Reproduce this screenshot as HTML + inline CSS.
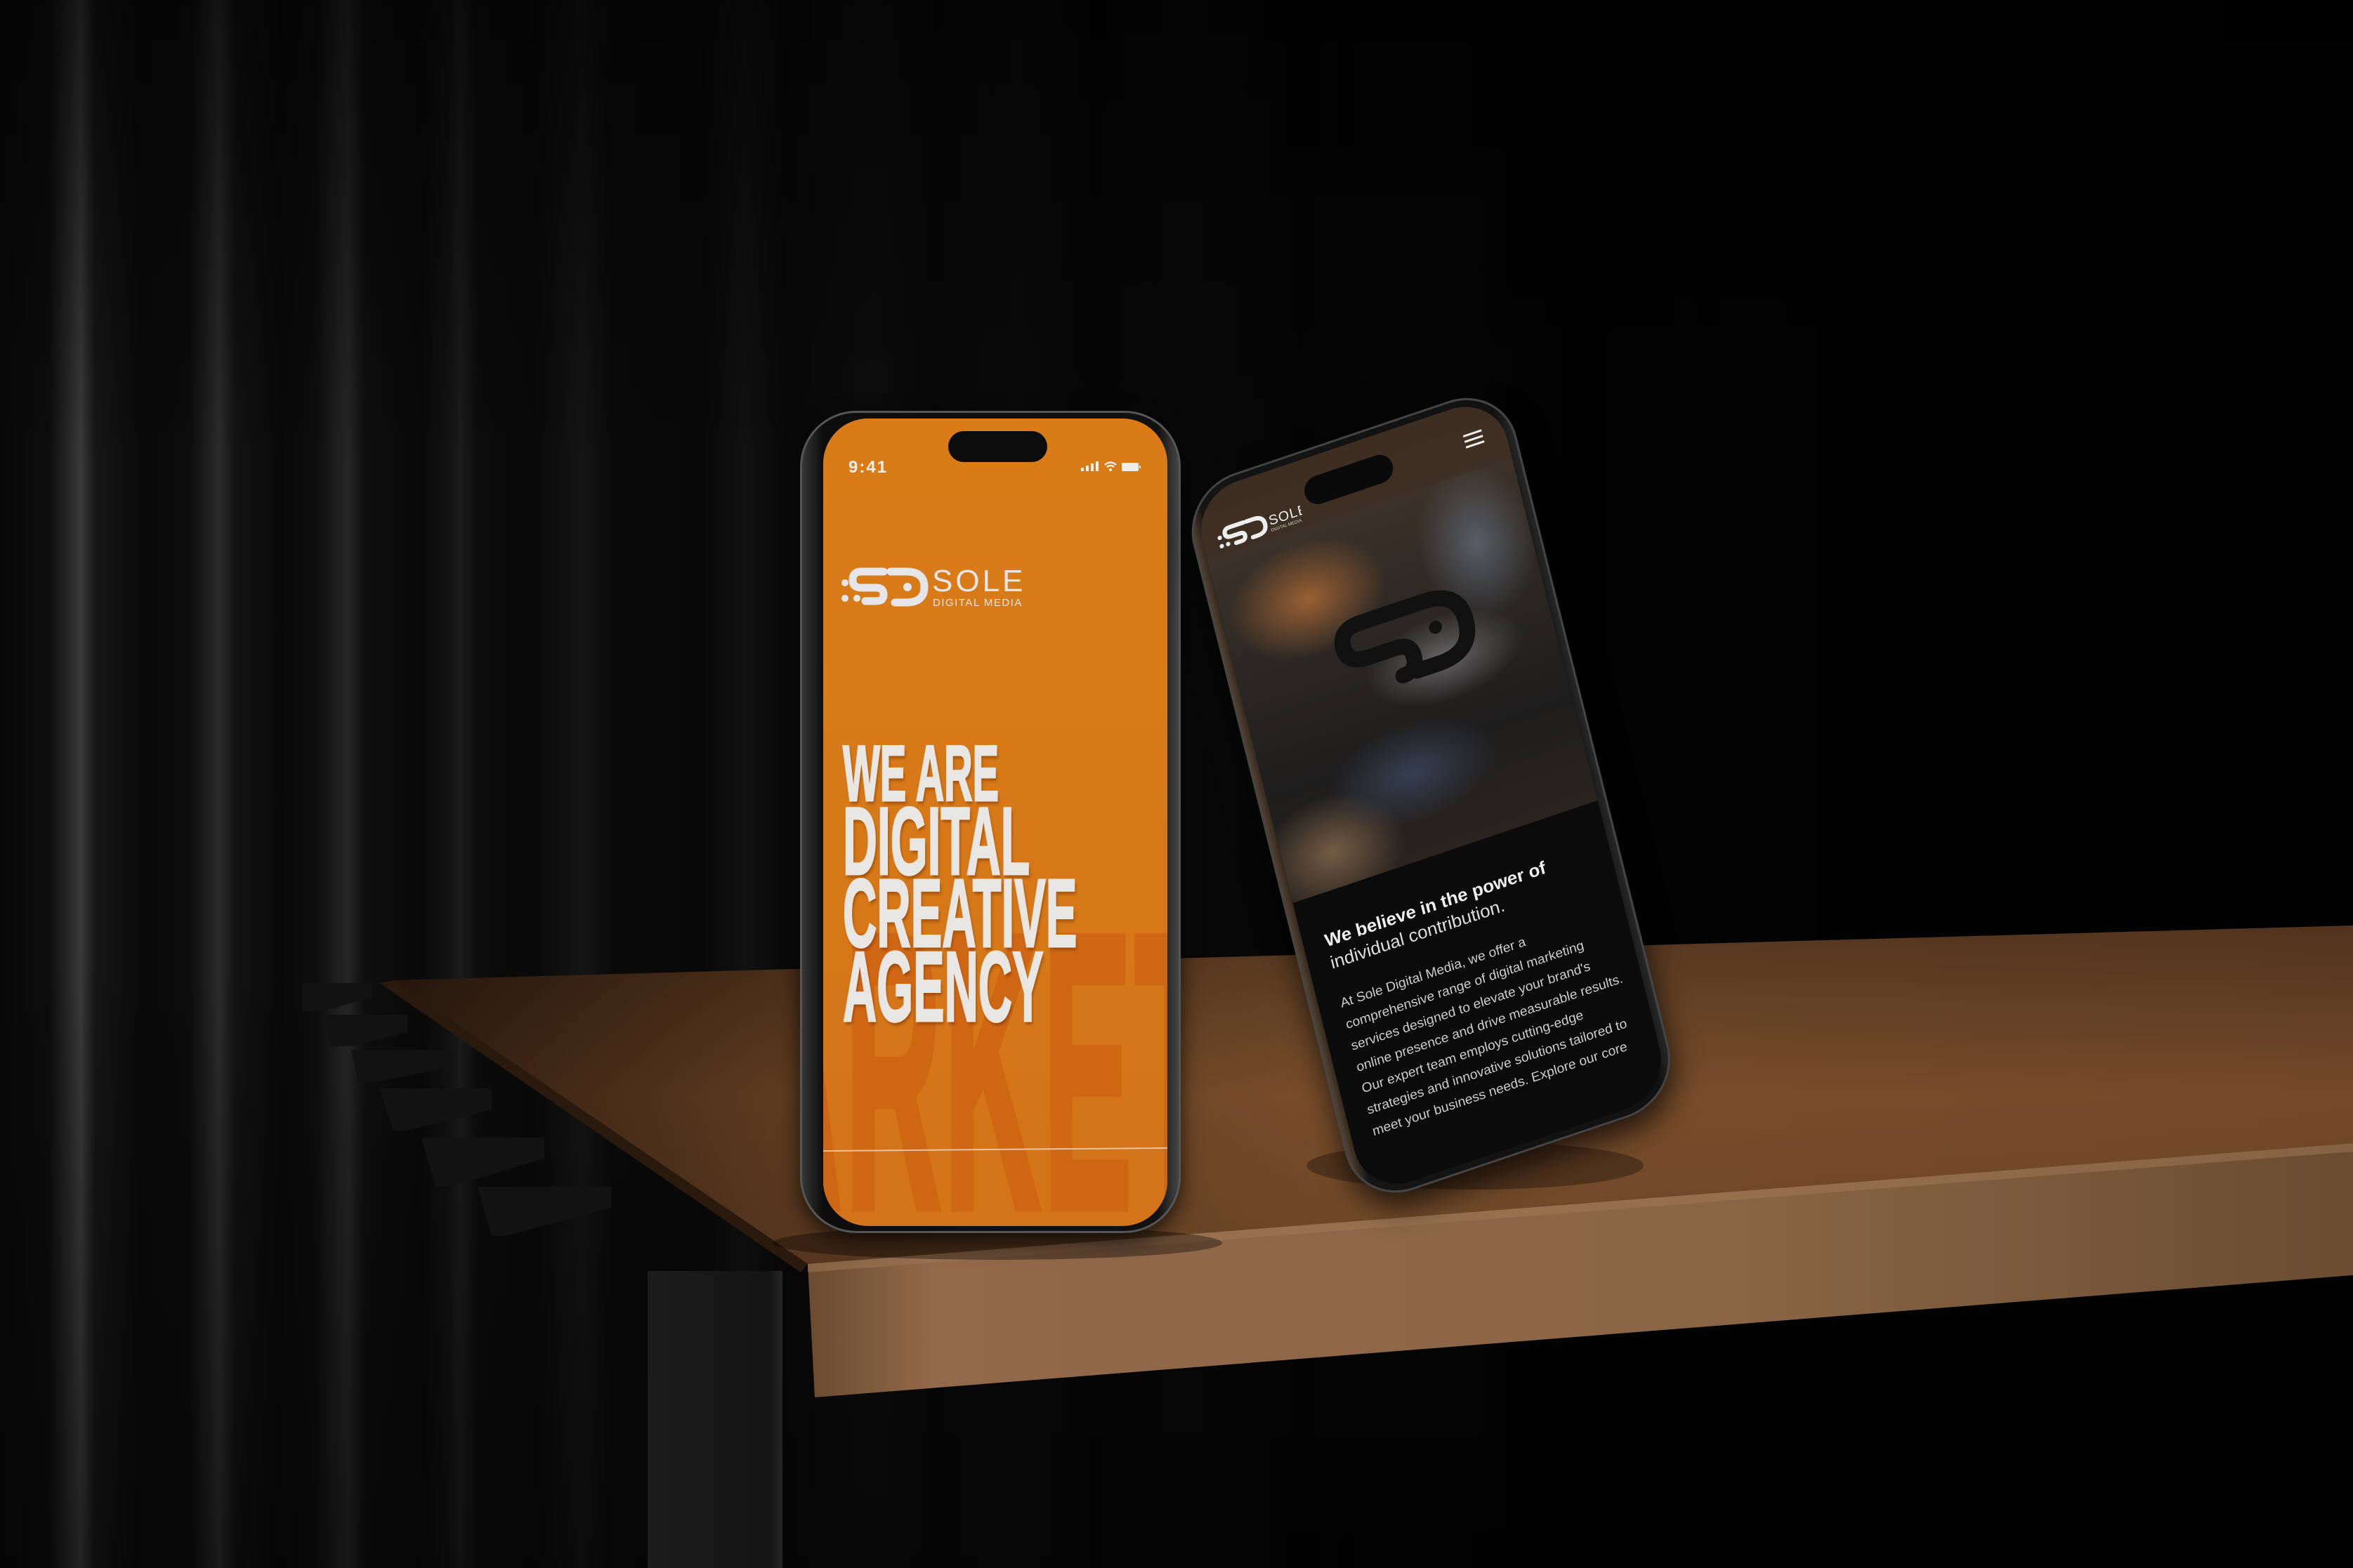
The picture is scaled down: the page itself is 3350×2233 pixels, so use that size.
<!DOCTYPE html>
<html><head><meta charset="utf-8">
<style>
*{margin:0;padding:0;box-sizing:border-box}
html,body{width:3350px;height:2233px;overflow:hidden;background:#050505}
#scene{position:absolute;left:0;top:0;width:3350px;height:2233px}
.curtain{position:absolute;left:0;top:0;width:3350px;height:2233px;
background:
linear-gradient(90deg,rgba(0,0,0,0) 0,rgba(0,0,0,0) 35%,rgba(0,0,0,.6) 65%,rgba(0,0,0,.85) 100%),
linear-gradient(90deg,#080808 0px,#0d0d0d 70px,#2a2a2a 100px,#3a3a3a 115px,#161616 135px,#0a0a0a 200px,#0c0c0c 270px,#222 300px,#2c2c2c 312px,#121212 335px,#090909 400px,#0d0d0d 450px,#1f1f1f 480px,#262626 495px,#0e0e0e 520px,#090909 600px,#121212 640px,#1c1c1c 655px,#0c0c0c 680px,#090909 760px,#141414 830px,#0a0a0a 870px,#080808 1000px,#111 1060px,#080808 1120px,#0e0e0e 1250px,#080808 1330px,#0d0d0d 1450px,#070707 1560px,#0c0c0c 1700px,#070707 1850px,#0b0b0b 2050px,#060606 2250px,#0a0a0a 2500px,#060606 2700px,#090909 3000px,#060606 3350px);}
.vshade{position:absolute;left:0;top:0;width:3350px;height:2233px;background:linear-gradient(180deg,rgba(0,0,0,.55) 0,rgba(0,0,0,0) 30%,rgba(0,0,0,0) 60%,rgba(0,0,0,.4) 100%)}
.phone1{position:absolute;left:1139px;top:585px;width:542px;height:1171px;border-radius:80px;background:linear-gradient(90deg,#3a3a3a,#0d0d0d 6%,#111 94%,#4a4a4a);box-shadow:0 10px 30px rgba(0,0,0,.7),inset 0 0 0 3px #555}
.scr1{position:absolute;left:33px;top:11px;width:490px;height:1150px;border-radius:64px;overflow:hidden;background:linear-gradient(180deg,#d97c18,#d67818 60%,#d3731a)}
.f{font-family:"Liberation Sans",sans-serif}
.hl{position:absolute;left:28px;white-space:nowrap;font-weight:bold;color:#e9e7e3;transform-origin:0 0;line-height:1;-webkit-text-stroke:3px #e9e7e3;text-shadow:4px 5px 5px rgba(120,50,0,.5)}
.bg{position:absolute;left:-110px;top:650px;white-space:nowrap;font-weight:bold;color:#cf6614;font-size:560px;line-height:1;transform:scaleX(.34);transform-origin:0 0;letter-spacing:10px;-webkit-text-stroke:12px #cf6614}
.phone2{position:absolute;left:0;top:0;width:460px;height:1040px;transform-origin:0 0;transform:matrix(1,-0.337,0.245,0.981,1680,700);border-radius:78px;background:linear-gradient(90deg,#5a4630,#151515 5%,#111 95%,#2a2a2a);box-shadow:0 20px 40px rgba(0,0,0,.7),inset 0 0 0 3px #444}
.scr2{position:absolute;left:13px;top:12px;width:434px;height:1016px;border-radius:66px;overflow:hidden;background:#0b0b0b}
.photo{position:absolute;left:0;top:0;width:434px;height:590px;background:
radial-gradient(ellipse 110px 80px at 120px 190px,rgba(170,105,55,.85),rgba(0,0,0,0)),
radial-gradient(ellipse 80px 110px at 360px 190px,rgba(100,110,125,.75),rgba(0,0,0,0)),
radial-gradient(ellipse 120px 70px at 200px 470px,rgba(55,65,85,.95),rgba(0,0,0,0)),
radial-gradient(ellipse 100px 80px at 70px 540px,rgba(120,95,70,.95),rgba(0,0,0,0)),
radial-gradient(ellipse 110px 60px at 280px 330px,rgba(180,180,185,.45),rgba(0,0,0,0)),
linear-gradient(180deg,#4a3a2c 0,#3a3027 20%,#2b2724 45%,#1e1d1d 75%,#2a241f 100%)}
.hdr{position:absolute;left:0;top:0;width:434px;height:92px;background:linear-gradient(180deg,rgba(60,45,32,.95),rgba(60,45,32,.6))}
.p2t{position:absolute;left:30px;color:#eee;white-space:nowrap}
</style></head><body>
<div id="scene">
<div class="curtain"></div>
<div class="vshade"></div>
<svg width="3350" height="2233" style="position:absolute;left:0;top:0">
<defs>
<linearGradient id="top" x1="0" y1="0" x2="1" y2="0">
<stop offset="0" stop-color="#2e1c10"/><stop offset=".2" stop-color="#5e3b20"/><stop offset=".5" stop-color="#7a4f2c"/><stop offset="1" stop-color="#74492a"/></linearGradient>
<linearGradient id="topv" x1="0" y1="0" x2="0" y2="1">
<stop offset="0" stop-color="#000" stop-opacity=".3"/><stop offset=".5" stop-color="#000" stop-opacity="0"/><stop offset="1" stop-color="#000" stop-opacity=".1"/></linearGradient>
<linearGradient id="front" x1="0" y1="0" x2="1" y2="0">
<stop offset="0" stop-color="#6a4a30"/><stop offset=".08" stop-color="#92694a"/><stop offset=".6" stop-color="#8a6545"/><stop offset="1" stop-color="#6a4c32"/></linearGradient>
<linearGradient id="leg" x1="0" y1="0" x2="1" y2="0">
<stop offset="0" stop-color="#1c1c1c"/><stop offset=".9" stop-color="#141414"/><stop offset="1" stop-color="#262626"/></linearGradient>
</defs>
<g fill="#121212">
<polygon points="430,1400 530,1400 530,1420 460,1440 430,1440"/>
<polygon points="460,1445 580,1445 580,1470 500,1490 470,1490"/>
<polygon points="500,1495 640,1495 640,1520 540,1540 510,1540"/>
<polygon points="540,1550 700,1550 700,1580 580,1610 560,1610"/>
<polygon points="600,1620 775,1620 775,1650 640,1690 620,1690"/>
<polygon points="680,1690 870,1690 870,1720 720,1760 700,1760"/>
</g>
<rect x="922" y="1810" width="192" height="423" fill="url(#leg)"/>
<polygon points="559,1396 3350,1318 3350,1628 1150,1800" fill="url(#top)"/>
<polygon points="559,1396 3350,1318 3350,1628 1150,1800" fill="url(#topv)"/>
<polygon points="559,1396 1150,1800 1140,1812 540,1400" fill="#2a1a0e"/>
<polygon points="1150,1800 3350,1628 3350,1816 1160,1990" fill="url(#front)"/>
<polygon points="1150,1800 3350,1628 3350,1640 1150,1812" fill="#a27a55" opacity=".5"/>
<ellipse cx="1420" cy="1770" rx="320" ry="24" fill="#000" opacity=".35"/>
<ellipse cx="2100" cy="1660" rx="240" ry="34" fill="#000" opacity=".3"/>
</svg>

<div class="phone1">
<div class="scr1">
<div class="bg f">ARKETI</div>
<div style="position:absolute;left:0;top:1040px;width:490px;height:2px;background:#f0d8c0;opacity:.8;transform:rotate(-0.5deg)"></div>
<div class="f" style="position:absolute;left:36px;top:56px;color:#eee;font-size:24px;font-weight:bold;letter-spacing:2px">9:41</div>
<div style="position:absolute;left:178px;top:18px;width:141px;height:44px;border-radius:22px;background:#0c0c0c"></div>
<svg style="position:absolute;left:365px;top:58px" width="90" height="22">
<g fill="#eee"><rect x="2" y="12" width="4" height="5"/><rect x="9" y="9" width="4" height="8"/><rect x="16" y="6" width="4" height="11"/><rect x="23" y="3" width="4" height="14"/></g>
<path d="M36 8 Q44 1 52 8 M39 11 Q44 7 49 11" stroke="#eee" stroke-width="2.5" fill="none"/><circle cx="44" cy="15" r="2" fill="#eee"/>
<rect x="60" y="5" width="24" height="12" rx="2" fill="#eee"/><rect x="85" y="9" width="2" height="4" fill="#eee"/></svg>
<svg style="position:absolute;left:26px;top:210px" width="130" height="60">
<g fill="#e6e6ea"><circle cx="5" cy="24" r="5"/><circle cx="5" cy="46" r="5"/><circle cx="22" cy="46" r="5"/></g>
<path d="M60 8 H28 Q16 8 16 20 Q16 31 28 31 H50 Q60 31 60 41 Q60 50 50 50 H34" stroke="#e6e6ea" stroke-width="11" fill="none" stroke-linecap="round"/>
<path d="M70 8 H92 Q118 8 118 30 Q118 52 92 52 H76" stroke="#e6e6ea" stroke-width="11" fill="none" stroke-linecap="round"/>
<circle cx="94" cy="30" r="6" fill="#e6e6ea"/></svg>
<div class="f" style="position:absolute;left:155px;top:210px;color:#e6e6ea;font-size:44px;letter-spacing:4px;line-height:1">SOLE</div>
<div class="f" style="position:absolute;left:156px;top:255px;color:#e6e6ea;font-size:15px;letter-spacing:1.5px;line-height:1">DIGITAL MEDIA</div>
<div class="hl f" style="top:450px;font-size:112px;transform:scaleX(.5)">WE ARE</div>
<div class="hl f" style="top:534px;font-size:137px;transform:scaleX(.495)">DIGITAL</div>
<div class="hl f" style="top:636px;font-size:138px;transform:scaleX(.485)">CREATIVE</div>
<div class="hl f" style="top:739px;font-size:142px;transform:scaleX(.47)">AGENCY</div>
</div>
</div>

<div class="phone2">
<div class="scr2">
<div class="photo"></div>
<svg style="position:absolute;left:120px;top:210px" width="220" height="190">
<path d="M110 35 H150 Q200 35 200 80 Q200 125 150 125 H120" stroke="#111" stroke-width="22" fill="none" stroke-linecap="round"/>
<path d="M110 35 H60 Q30 35 30 60 Q30 85 60 85 H100 Q120 85 120 105 Q120 125 100 125" stroke="#111" stroke-width="22" fill="none" stroke-linecap="round"/>
<circle cx="158" cy="75" r="9" fill="#111"/></svg>
<div class="hdr"></div>
<div style="position:absolute;left:150px;top:28px;width:125px;height:40px;border-radius:20px;background:#0a0a0a"></div>
<svg style="position:absolute;left:20px;top:50px" width="120" height="40">
<g fill="#eee"><circle cx="4" cy="18" r="3"/><circle cx="4" cy="30" r="3"/><circle cx="13" cy="30" r="3"/></g>
<path d="M40 8 H20 Q12 8 12 15 Q12 21 20 21 H32 Q38 21 38 26 Q38 32 32 32 H24" stroke="#eee" stroke-width="6" fill="none" stroke-linecap="round"/>
<path d="M44 8 H54 Q68 8 68 20 Q68 32 54 32 H48" stroke="#eee" stroke-width="6" fill="none" stroke-linecap="round"/>
<text x="74" y="24" fill="#eee" font-family="Liberation Sans" font-size="19" letter-spacing="1">SOLE</text>
<text x="74" y="33" fill="#ccc" font-family="Liberation Sans" font-size="6">DIGITAL MEDIA</text></svg>
<svg style="position:absolute;left:375px;top:38px" width="32" height="24"><g stroke="#eee" stroke-width="3"><line x1="2" y1="4" x2="28" y2="4"/><line x1="2" y1="12" x2="28" y2="12"/><line x1="2" y1="20" x2="28" y2="20"/></g></svg>
<div class="p2t f" style="top:642px;font-size:25px;font-weight:bold">We believe in the power of</div>
<div class="p2t f" style="top:674px;font-size:25px;color:#ddd">individual contribution.</div>
<div class="f" style="position:absolute;left:30px;top:730px;width:400px;color:#ccc;font-size:18.5px;line-height:31px">At Sole Digital Media, we offer a<br>comprehensive range of digital marketing<br>services designed to elevate your brand's<br>online presence and drive measurable results.<br>Our expert team employs cutting-edge<br>strategies and innovative solutions tailored to<br>meet your business needs. Explore our core</div>
</div>
</div>
</div>
</body></html>
